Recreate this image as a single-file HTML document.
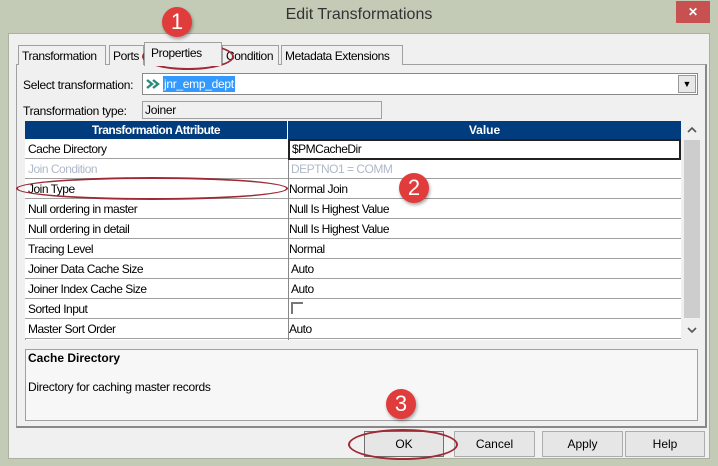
<!DOCTYPE html>
<html><head><style>
*{margin:0;padding:0;box-sizing:border-box}
body{width:718px;height:466px;background:#c3cbb7;position:relative;overflow:hidden;font-family:"Liberation Sans",sans-serif;font-size:12px;color:#000}
.a{position:absolute}
.t{font-family:"Liberation Sans",sans-serif;font-size:12px;letter-spacing:-0.3px}
.tab{position:absolute;top:45px;height:20px;border:1px solid #a0a0a0;border-bottom:none;background:#f0f0f0;font-family:"Liberation Sans",sans-serif;font-size:12px;letter-spacing:-0.4px;padding:3px 0 0 3px;white-space:nowrap;overflow:hidden}
.row{position:absolute;left:25px;width:656px;height:20px;border-bottom:1px solid #a0a0a0;background:#fff;font-size:12px;letter-spacing:-0.5px}
.row span{position:absolute;top:3px;white-space:nowrap}
.btn{position:absolute;top:431px;height:26px;border:1px solid #acacac;background:#e6e6e6;text-align:center;line-height:24px;font-family:"Liberation Sans",sans-serif;font-size:12px}
.badge{position:absolute;width:30px;height:30px;border-radius:50%;background:#e03c3c;color:#fff;font-family:"Liberation Sans",sans-serif;font-size:22px;text-align:center;line-height:30px;box-shadow:1px 2px 3px rgba(0,0,0,.35)}
.ell{position:absolute;border:2px solid #9e2a36;border-radius:50%}
</style></head><body>
<div class="a" style="left:0;top:6px;width:718px;text-align:center;font-family:'Liberation Sans',sans-serif;font-size:16px;color:#333">Edit Transformations</div>
<div class="a" style="left:676px;top:1px;width:34px;height:22px;background:#c75050;color:#fff;text-align:center;font:bold 12px 'Liberation Sans',sans-serif;line-height:22px">✕</div>
<div class="a" style="left:8px;top:33px;width:702px;height:426px;background:#f0f0f0;border:1px solid #aab29f"></div>
<div class="a" style="left:16px;top:64px;width:691px;height:364px;border:1px solid #a0a0a0;border-right:2px solid #888;border-bottom:2px solid #888;background:#f0f0f0"></div>
<div class="tab" style="left:18px;width:88px">Transformation</div>
<div class="tab" style="left:109px;width:35px">Ports</div>
<div class="tab" style="left:144px;top:42px;height:24px;width:78px;z-index:2;padding-left:6px">Properties</div>
<div class="tab" style="left:222px;width:57px">Condition</div>
<div class="tab" style="left:281px;width:122px">Metadata Extensions</div>
<div class="a t" style="left:23px;top:78px">Select transformation:</div>
<div class="a" style="left:142px;top:73px;width:556px;height:22px;background:#fff;border:1px solid #8a8a8a"></div>
<svg class="a" style="left:146px;top:78px" width="16" height="12"><path d="M1 2l5 4-5 4M7 2l5 4-5 4" stroke="#2a8a7a" stroke-width="2.4" fill="none"/></svg>
<div class="a t" style="left:163px;top:76px;background:#3399ff;color:#fff;padding:1px 1px;height:16px">jnr_emp_dept</div>
<div class="a" style="left:678px;top:75px;width:18px;height:18px;background:#e8e8e8;border:1px solid #999;text-align:center;font-size:9px;line-height:17px">▼</div>
<div class="a t" style="left:23px;top:104px">Transformation type:</div>
<div class="a t" style="left:142px;top:101px;width:240px;height:18px;background:#f0f0f0;border:1px solid #a0a0a0;padding:1px 2px">Joiner</div>
<div class="a" style="left:25px;top:121px;width:656px;height:219px;background:#fff;border-left:1px solid #a0a0a0"></div>
<div class="a" style="left:25px;top:121px;width:263px;height:18px;background:#003c7e;color:#fff;font-weight:bold;text-align:center;line-height:18px;border-right:1px solid #fff;letter-spacing:-0.5px">Transformation Attribute</div>
<div class="a" style="left:288px;top:121px;width:393px;height:18px;background:#003c7e;color:#fff;font-weight:bold;text-align:center;line-height:18px">Value</div>
<div class="row" style="top:139px"><span style="left:3px">Cache Directory</span></div>
<div class="row" style="top:159px;color:#b0b8c8"><span style="left:3px">Join Condition</span><span style="left:266px">DEPTNO1 = COMM</span></div>
<div class="row" style="top:179px"><span style="left:3px">Join Type</span><span style="left:264px">Normal Join</span></div>
<div class="row" style="top:199px"><span style="left:3px">Null ordering in master</span><span style="left:264px">Null Is Highest Value</span></div>
<div class="row" style="top:219px"><span style="left:3px">Null ordering in detail</span><span style="left:264px">Null Is Highest Value</span></div>
<div class="row" style="top:239px"><span style="left:3px">Tracing Level</span><span style="left:264px">Normal</span></div>
<div class="row" style="top:259px"><span style="left:3px">Joiner Data Cache Size</span><span style="left:266px">Auto</span></div>
<div class="row" style="top:279px"><span style="left:3px">Joiner Index Cache Size</span><span style="left:266px">Auto</span></div>
<div class="row" style="top:299px"><span style="left:3px">Sorted Input</span></div>
<div class="row" style="top:319px"><span style="left:3px">Master Sort Order</span><span style="left:264px">Auto</span></div>
<div class="a" style="left:288px;top:139px;width:1px;height:201px;background:#888"></div>
<div class="a" style="left:288px;top:139px;width:393px;height:21px;border:2px solid #222;background:#fff;padding:1px 2px;letter-spacing:-0.5px">$PMCacheDir</div>
<div class="a" style="left:291px;top:302px;width:12px;height:12px;border-top:2px solid #777;border-left:2px solid #777"></div>
<div class="a" style="left:683px;top:121px;width:17px;height:219px;background:#f0f0f0"></div>
<div class="a" style="left:684px;top:140px;width:16px;height:178px;background:#cdcdcd"></div>
<svg class="a" style="left:686px;top:126px" width="12" height="8"><path d="M2 6l4-4 4 4" stroke="#555" stroke-width="1.6" fill="none"/></svg>
<svg class="a" style="left:686px;top:326px" width="12" height="8"><path d="M2 2l4 4 4-4" stroke="#555" stroke-width="1.6" fill="none"/></svg>
<div class="a" style="left:25px;top:349px;width:673px;height:72px;background:#f7f7f7;border:1px solid #a0a0a0"></div>
<div class="a" style="left:28px;top:351px;font-weight:bold;font-size:12px">Cache Directory</div>
<div class="a t" style="left:28px;top:380px">Directory for caching master records</div>
<div class="btn" style="left:364px;width:80px;border-color:#707070">OK</div>
<div class="btn" style="left:454px;width:81px">Cancel</div>
<div class="btn" style="left:542px;width:81px">Apply</div>
<div class="btn" style="left:625px;width:80px">Help</div>
<div class="ell" style="left:142px;top:43px;width:92px;height:27px"></div>
<div class="ell" style="left:16px;top:177px;width:272px;height:23px"></div>
<div class="ell" style="left:348px;top:429px;width:110px;height:31px"></div>
<div class="badge" style="left:162px;top:7px">1</div>
<div class="badge" style="left:399px;top:173px">2</div>
<div class="badge" style="left:386px;top:389px">3</div>
</body></html>
